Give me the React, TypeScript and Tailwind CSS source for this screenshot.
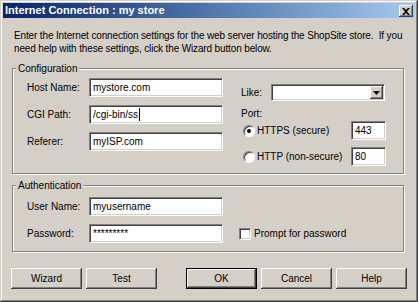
import React from 'react';

const Field: React.FC<{ value?: string; className?: string; caret?: boolean }> = ({ value = '', className = '', caret = false }) => (
  <div
    className={`h-[19px] bg-white border border-t-[#808080] border-l-[#808080] border-b-white border-r-white shadow-[inset_1px_1px_0_#404040,inset_-1px_-1px_0_#d4d0c8] flex items-center pl-[3px] overflow-hidden whitespace-nowrap ${className}`}
  >
    <span>{value}</span>
    {caret && <span className="ml-[1px] w-[1px] h-[13px] bg-black" />}
  </div>
);

const Btn: React.FC<{ label: string; primary?: boolean }> = ({ label, primary = false }) => (
  <button
    className={`w-[71px] h-[21px] bg-[#d4d0c8] flex items-center justify-center ${
      primary
        ? 'border border-black shadow-[inset_-1px_-1px_0_#404040,inset_1px_1px_0_#fff,inset_-2px_-2px_0_#808080]'
        : 'shadow-[inset_-1px_-1px_0_#404040,inset_1px_1px_0_#fff,inset_-2px_-2px_0_#808080]'
    }`}
  >
    {label}
  </button>
);

const Radio: React.FC<{ checked?: boolean }> = ({ checked = false }) => (
  <span className="w-[12px] h-[12px] rounded-full bg-white border border-t-[#808080] border-l-[#808080] border-b-white border-r-white shadow-[inset_1px_1px_0_#404040] flex items-center justify-center">
    {checked && <span className="w-[4px] h-[4px] rounded-full bg-black" />}
  </span>
);

export default function App() {
  return (
    <div className="w-[418px] h-[302px] bg-[#d4d0c8] p-[3px] shadow-[inset_-1px_-1px_0_#404040,inset_1px_1px_0_#d4d0c8,inset_-2px_-2px_0_#808080,inset_2px_2px_0_#fff] text-[10px] leading-[13px] text-black font-['Liberation_Sans',Arial,sans-serif] flex flex-col">
      {/* Title bar */}
      <div className="h-[15px] bg-gradient-to-r from-[#0a246a] to-[#a6caf0] flex items-start justify-between pl-[2px] pr-[2px]">
        <span className="text-white text-[11px] font-bold leading-[15px]">Internet Connection : my store</span>
        <button className="mt-[2px] w-[14px] h-[12px] bg-[#d4d0c8] shadow-[inset_-1px_-1px_0_#404040,inset_1px_1px_0_#fff,inset_-2px_-2px_0_#808080] flex items-center justify-center">
          <svg width="8" height="7" viewBox="0 0 8 7">
            <path d="M0 0h2l2 2 2-2h2L5 3.5 8 7H6L4 5 2 7H0l3-3.5z" fill="#000" />
          </svg>
        </button>
      </div>

      {/* Intro */}
      <p className="mt-[11px] pl-[11px] whitespace-pre tracking-[-0.14px]">
        {'Enter the Internet connection settings for the web server hosting the ShopSite store.  If you'}
        <br />
        {'need help with these settings, click the Wizard button below.'}
      </p>

      {/* Configuration */}
      <fieldset className="mt-[7px] ml-[9px] w-[392px] h-[112px] min-w-0 border border-[#808080] shadow-[1px_1px_0_#fff,inset_1px_1px_0_#fff]">
        <legend className="ml-[3px] px-[2px] bg-[#d4d0c8] leading-[13px]">Configuration</legend>
        <div className="flex pl-[14px] pt-[3px]">
          <div className="flex flex-col gap-[8px]">
            <div className="flex items-center h-[19px]">
              <span className="w-[62px]">Host Name:</span>
              <Field value="mystore.com" className="w-[134px]" />
            </div>
            <div className="flex items-center h-[19px]">
              <span className="w-[62px]">CGI Path:</span>
              <Field value="/cgi-bin/ss" caret className="w-[134px]" />
            </div>
            <div className="flex items-center h-[19px]">
              <span className="w-[62px]">Referer:</span>
              <Field value="myISP.com" className="w-[134px]" />
            </div>
          </div>

          <div className="ml-[18px] flex flex-col">
            <div className="mt-[6px] flex items-center h-[17px]">
              <span className="w-[30px]">Like:</span>
              <div className="w-[114px] h-[17px] bg-white border border-t-[#808080] border-l-[#808080] border-b-white border-r-white shadow-[inset_1px_1px_0_#404040,inset_-1px_-1px_0_#d4d0c8] flex justify-end p-[1px]">
                <div className="w-[13px] h-full bg-[#d4d0c8] shadow-[inset_-1px_-1px_0_#404040,inset_1px_1px_0_#fff,inset_-2px_-2px_0_#808080] flex items-center justify-center">
                  <svg width="7" height="4" viewBox="0 0 7 4">
                    <path d="M0 0h7L3.5 4z" fill="#000" />
                  </svg>
                </div>
              </div>
            </div>
            <span className="mt-[6px]">Port:</span>
            <div className="mt-[1px] grid grid-cols-[110px_35px] items-center h-[19px]">
              <div className="flex items-center pl-[2px]">
                <Radio checked />
                <span className="ml-[2px]">HTTPS (secure)</span>
              </div>
              <Field value="443" className="w-[35px]" />
            </div>
            <div className="mt-[7px] grid grid-cols-[110px_35px] items-center h-[19px]">
              <div className="flex items-center pl-[2px]">
                <Radio />
                <span className="ml-[2px]">HTTP (non-secure)</span>
              </div>
              <Field value="80" className="w-[35px]" />
            </div>
          </div>
        </div>
      </fieldset>

      {/* Authentication */}
      <fieldset className="mt-[5px] ml-[9px] w-[392px] h-[73px] min-w-0 border border-[#808080] shadow-[1px_1px_0_#fff,inset_1px_1px_0_#fff]">
        <legend className="ml-[3px] px-[2px] bg-[#d4d0c8] leading-[13px]">Authentication</legend>
        <div className="flex flex-col gap-[8px] pl-[14px] pt-[5px]">
          <div className="flex items-center h-[19px]">
            <span className="w-[62px]">User Name:</span>
            <Field value="myusername" className="w-[134px]" />
          </div>
          <div className="flex items-center h-[19px]">
            <span className="w-[62px]">Password:</span>
            <Field value="*********" className="w-[134px]" />
            <span className="ml-[16px] w-[12px] h-[12px] bg-white border border-t-[#808080] border-l-[#808080] border-b-white border-r-white shadow-[inset_1px_1px_0_#404040,inset_-1px_-1px_0_#d4d0c8]" />
            <span className="ml-[3px]">Prompt for password</span>
          </div>
        </div>
      </fieldset>

      {/* Buttons */}
      <div className="mt-[16px] ml-[8px] flex items-center">
        <Btn label="Wizard" />
        <div className="ml-[4px]">
          <Btn label="Test" />
        </div>
        <div className="ml-[29px]">
          <Btn label="OK" primary />
        </div>
        <div className="ml-[4px]">
          <Btn label="Cancel" />
        </div>
        <div className="ml-[4px]">
          <Btn label="Help" />
        </div>
      </div>
    </div>
  );
}
